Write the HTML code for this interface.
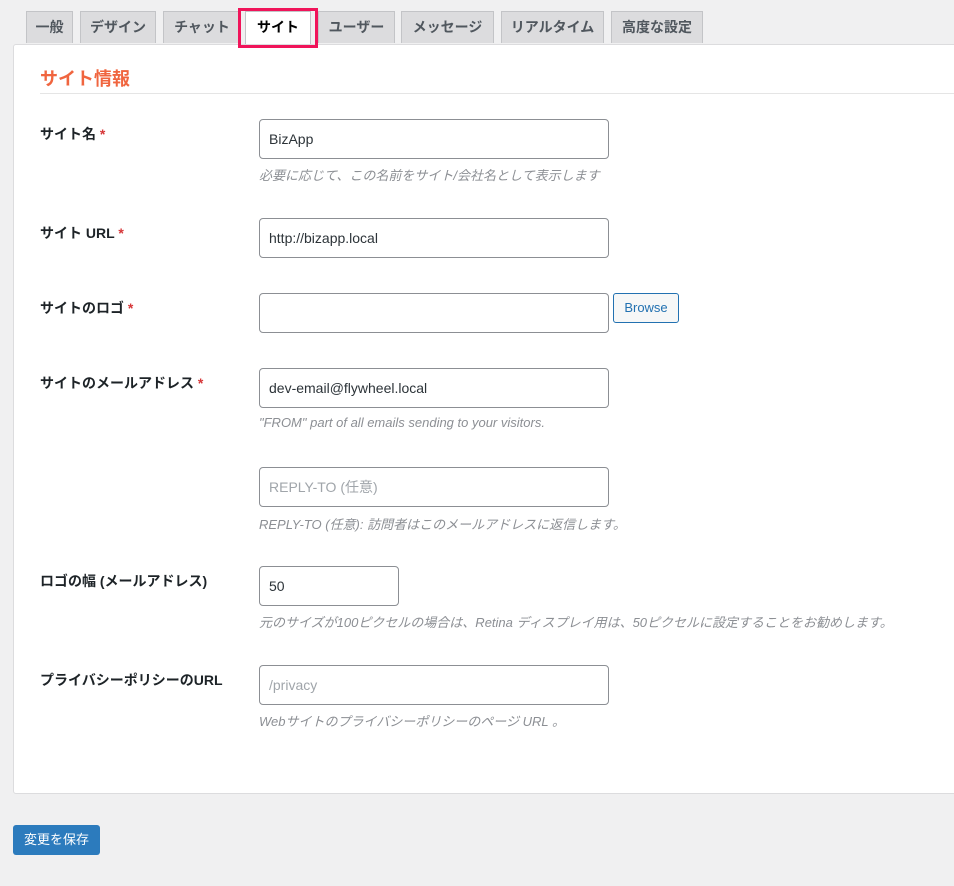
<!DOCTYPE html>
<html><head><meta charset="utf-8"><style>
body{margin:0;width:954px;height:886px;background:#f0f0f1;font-family:"Liberation Sans","Noto Sans CJK JP",sans-serif;position:relative;overflow:hidden;color:#1d2327}
.tab{position:absolute;top:11px;height:32px;background:#dcdcde;border:1px solid #c3c4c7;border-bottom:none;box-sizing:border-box;font-size:14px;font-weight:bold;color:#50575e;text-align:center;line-height:31px}
.tab.act{background:#fff;color:#000;height:34px}
.hl{position:absolute;left:238px;top:8px;width:80px;height:40px;border:3px solid #f0145a;box-sizing:border-box}
.panel{position:absolute;left:13px;top:44px;width:960px;height:750px;background:#fff;border:1px solid #dcdcde;border-radius:3px;box-sizing:border-box}
h2{position:absolute;left:40px;top:65px;margin:0;font-size:18px;color:#f0653f;font-weight:bold}
.hr{position:absolute;left:40px;top:93px;width:914px;height:1px;background:#e5e5e5}
.lbl{position:absolute;left:40px;font-size:14px;font-weight:bold;color:#1d2327}
.lbl b{color:#d63638}
.in{position:absolute;left:259px;width:350px;height:40px;border:1px solid #8c8f94;border-radius:4px;box-sizing:border-box;font-size:14px;line-height:38px;padding-left:9px;color:#2c3338}
.ph{color:#a0a5aa}
.d{position:absolute;left:259px;font-size:13px;font-style:italic;color:#8c8f94}
</style></head><body>
<div class="tab" style="left:26px;width:47px">一般</div>
<div class="tab" style="left:80px;width:76px">デザイン</div>
<div class="tab" style="left:163px;width:78px">チャット</div>
<div class="tab act" style="left:245px;width:66px">サイト</div>
<div class="tab" style="left:318px;width:77px">ユーザー</div>
<div class="tab" style="left:401px;width:93px">メッセージ</div>
<div class="tab" style="left:501px;width:103px">リアルタイム</div>
<div class="tab" style="left:611px;width:92px">高度な設定</div>
<div class="panel"></div>
<div class="hl"></div>
<h2>サイト情報</h2><div class="hr"></div>

<div class="lbl" style="top:124px">サイト名 <b>*</b></div>
<div class="in" style="top:119px">BizApp</div>
<div class="d" style="top:165px">必要に応じて、この名前をサイト/会社名として表示します</div>

<div class="lbl" style="top:223px">サイト URL <b>*</b></div>
<div class="in" style="top:218px">http://bizapp.local</div>

<div class="lbl" style="top:298px">サイトのロゴ <b>*</b></div>
<div class="in" style="top:293px"></div>
<div style="position:absolute;left:613px;top:293px;width:66px;height:30px;border:1px solid #2271b1;border-radius:3px;background:#f6f7f7;box-sizing:border-box;color:#2271b1;font-size:13px;text-align:center;line-height:28px">Browse</div>

<div class="lbl" style="top:373px">サイトのメールアドレス <b>*</b></div>
<div class="in" style="top:368px">dev-email@flywheel.local</div>
<div class="d" style="top:415px">"FROM" part of all emails sending to your visitors.</div>

<div class="in ph" style="top:467px">REPLY-TO (任意)</div>
<div class="d" style="top:514px">REPLY-TO (任意): 訪問者はこのメールアドレスに返信します。</div>

<div class="lbl" style="top:571px">ロゴの幅 (メールアドレス)</div>
<div class="in" style="top:566px;width:140px">50</div>
<div class="d" style="top:612px">元のサイズが100ピクセルの場合は、Retina ディスプレイ用は、50ピクセルに設定することをお勧めします。</div>

<div class="lbl" style="top:670px">プライバシーポリシーのURL</div>
<div class="in ph" style="top:665px">/privacy</div>
<div class="d" style="top:711px">Webサイトのプライバシーポリシーのページ URL 。</div>

<div style="position:absolute;left:13px;top:825px;width:87px;height:30px;background:#2c7bbd;border-radius:3px;color:#fff;font-size:13px;text-align:center;line-height:30px">変更を保存</div>
</body></html>
